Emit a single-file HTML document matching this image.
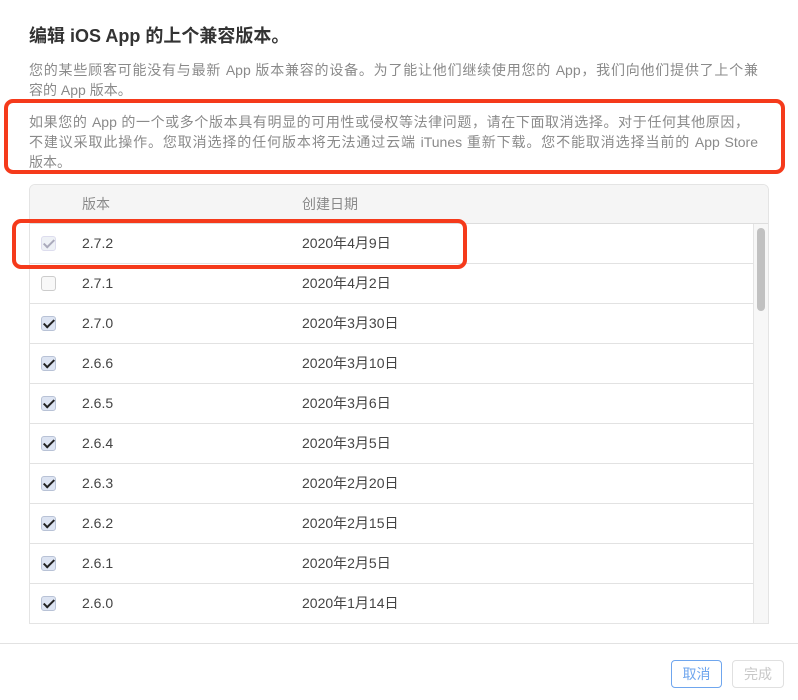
<!DOCTYPE html>
<html><head><meta charset="utf-8"><style>
*{margin:0;padding:0;box-sizing:border-box}
body{width:798px;height:700px;background:#fff;font-family:"Liberation Sans","Noto Sans CJK SC",sans-serif;position:relative;overflow:hidden;color:#333}
.t{position:absolute;left:29px;top:22px;font-size:18px;font-weight:bold;color:#333}
.p{position:absolute;left:29px;font-size:14px;line-height:20px;color:#8a8a8a;white-space:nowrap}
.p .j{display:block;text-align:justify;text-align-last:justify}
.red{position:absolute;border:4px solid #f53a1b;border-radius:9px}
.tbl{position:absolute;left:29px;top:184px;width:740px;height:440px;border:1px solid #e4e4e4;border-radius:6px 6px 0 0;overflow:hidden}
.hd{height:39px;background:#f5f5f5;border-bottom:1px solid #ddd;font-size:14px;color:#8a8a8a;position:relative}
.row{height:40px;border-bottom:1px solid #e2e2e2;position:relative;font-size:14px;color:#444;width:724px}
.c1,.c2{position:absolute;top:0;line-height:39px;height:39px}
.c1{left:52px}
.c2{left:272px}
.cb{position:absolute;left:11px;top:12px;width:15px;height:15px;border:1px solid #ccc;border-radius:3px;background:#f8f8f8}
.cb.on{background:#dde4f2;border-color:#b8c2d6}
.cb.on::after{content:"";position:absolute;left:4px;top:0px;width:4px;height:9px;border:solid #222;border-width:0 2px 2px 0;transform:rotate(45deg)}
.cb.dis{background:#eef1f6;border-color:#dde}
.cb.dis::after{border-color:#aab}
.sb{position:absolute;right:0;top:39px;width:15px;height:400px;background:#f7f7f7;border-left:1px solid #e4e4e4}
.th{position:absolute;left:3px;top:4px;width:8px;height:83px;border-radius:4px;background:#c1c1c1}
.line{position:absolute;left:0;top:643px;width:798px;height:1px;background:#e2e2e2}
.btn{position:absolute;top:660px;height:28px;border-radius:4px;font-size:14px;text-align:center;line-height:26px}
</style></head><body>
<div class="t">编辑 iOS App 的上个兼容版本。</div>
<div class="p" style="top:60px"><span class="j" style="width:729px">您的某些顾客可能没有与最新 App 版本兼容的设备。为了能让他们继续使用您的 App，我们向他们提供了上个兼</span>容的 App 版本。</div>
<div class="p" style="top:112px"><span class="j" style="width:720px">如果您的 App 的一个或多个版本具有明显的可用性或侵权等法律问题，请在下面取消选择。对于任何其他原因，</span><span class="j" style="width:729px">不建议采取此操作。您取消选择的任何版本将无法通过云端 iTunes 重新下载。您不能取消选择当前的 App Store</span>版本。</div>
<div class="red" style="left:4px;top:99px;width:781px;height:75px"></div>
<div class="tbl">
<div class="hd"><span class="c1">版本</span><span class="c2">创建日期</span></div>
<div class="row"><div class="cb on dis"></div><span class="c1">2.7.2</span><span class="c2">2020年4月9日</span></div>
<div class="row"><div class="cb"></div><span class="c1">2.7.1</span><span class="c2">2020年4月2日</span></div>
<div class="row"><div class="cb on"></div><span class="c1">2.7.0</span><span class="c2">2020年3月30日</span></div>
<div class="row"><div class="cb on"></div><span class="c1">2.6.6</span><span class="c2">2020年3月10日</span></div>
<div class="row"><div class="cb on"></div><span class="c1">2.6.5</span><span class="c2">2020年3月6日</span></div>
<div class="row"><div class="cb on"></div><span class="c1">2.6.4</span><span class="c2">2020年3月5日</span></div>
<div class="row"><div class="cb on"></div><span class="c1">2.6.3</span><span class="c2">2020年2月20日</span></div>
<div class="row"><div class="cb on"></div><span class="c1">2.6.2</span><span class="c2">2020年2月15日</span></div>
<div class="row"><div class="cb on"></div><span class="c1">2.6.1</span><span class="c2">2020年2月5日</span></div>
<div class="row"><div class="cb on"></div><span class="c1">2.6.0</span><span class="c2">2020年1月14日</span></div>
<div class="sb"><div class="th"></div></div>
</div>
<div class="red" style="left:12px;top:219px;width:455px;height:50px"></div>
<div class="line"></div>
<div class="btn" style="left:671px;width:51px;border:1px solid #6fa6ee;color:#6fa6ee">取消</div>
<div class="btn" style="left:732px;width:52px;border:1px solid #e0e0e0;color:#c8c8c8">完成</div>
</body></html>
